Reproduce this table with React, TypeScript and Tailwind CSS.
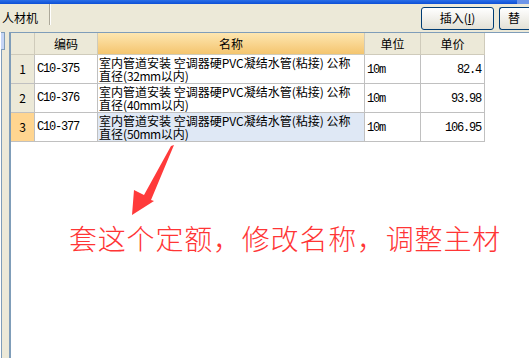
import React from "react";

const CJK = "font-['SimSun','Noto_Sans_CJK_SC',sans-serif]";
const MONO = "font-['Liberation_Mono',monospace] text-[12px] tracking-[-1.2px]";

type Row = { no: number; code: string; size: string; unit: string; price: string };

const rows: Row[] = [
  { no: 1, code: "C10-375", size: "32", unit: "10m", price: "82.4" },
  { no: 2, code: "C10-376", size: "40", unit: "10m", price: "93.98" },
  { no: 3, code: "C10-377", size: "50", unit: "10m", price: "106.95" },
];

function XpButton({ children, className = "" }: { children: React.ReactNode; className?: string }) {
  return (
    <div
      className={`flex h-[23px] items-center justify-center rounded-[3px] border border-[#003c74] bg-gradient-to-b from-white to-[#e3e1d6] text-[12px] text-black ${className}`}
    >
      {children}
    </div>
  );
}

export default function App() {
  return (
    <div className={`relative flex h-[358px] w-[529px] flex-col overflow-hidden bg-white ${CJK}`}>
      {/* title bar strip */}
      <div className="flex h-[4px] bg-gradient-to-b from-[#2a6ee8] to-[#0c4fd6]">
        <div className="flex-1" />
        <div className="w-[12px] bg-[#6d95e8]" />
      </div>

      {/* toolbar */}
      <div className="flex h-[28px] items-center bg-[#ece9d8]">
        <div className="flex h-full items-center pl-[2px] pr-[11px] text-[12px] text-black">人材机</div>
        <div className="h-[21px] w-[2px] self-start border-l border-r border-l-[#aca899] border-r-white" />
        <div className="flex-1" />
        <XpButton className="w-[73px]">
          插入(<span className="underline">I</span>)
        </XpButton>
        <XpButton className="ml-[5px] w-[30px] justify-start rounded-r-none border-r-0 pl-[8px]">替</XpButton>
      </div>

      {/* body */}
      <div className="flex flex-1">
        {/* left dock */}
        <div className="flex w-[9px] flex-col border-l border-white bg-[#ece9d8]">
          <div className="h-[18px] w-[4px] border-y border-r border-[#7f9db9] bg-[#c5d5f5]" />
          <div className="flex flex-1">
            <div className="w-[1px] bg-[#7f9db9]" />
          </div>
        </div>

        {/* grid panel */}
        <div className="relative flex flex-1 flex-col border-l-2 border-t border-[#7f9db9] bg-white">
          <div className="flex flex-col text-[12px] text-black">
            {/* header */}
            <div className="flex h-[22px]">
              <div className="w-[24px] border-b border-r border-[#cfcbbb] bg-[#ece9d8]" />
              <div className="flex w-[63px] items-center justify-center border-b border-r border-[#cfcbbb] bg-[#ece9d8]">编码</div>
              <div className="flex w-[267px] items-center justify-center border-b border-r border-[#cfcbbb] bg-gradient-to-b from-[#fde6b0] to-[#f4c56e]">名称</div>
              <div className="flex w-[56px] items-center justify-center border-b border-r border-[#cfcbbb] bg-[#ece9d8]">单位</div>
              <div className="flex w-[64px] items-center justify-center border-b border-r border-[#cfcbbb] bg-[#ece9d8]">单价</div>
            </div>

            {rows.map((r) => {
              const sel = r.no === 3;
              return (
                <div key={r.no} className="flex h-[29px]">
                  <div
                    className={`flex w-[24px] items-center justify-center border-b border-r border-[#c0c0c0] ${
                      sel ? "bg-[#ffd590]" : "bg-[#ece9d8]"
                    }`}
                  >
                    {r.no}
                  </div>
                  <div className={`flex w-[63px] items-center border-b border-r border-[#c0c0c0] pl-[2px] ${MONO}`}>
                    {r.code}
                  </div>
                  <div
                    className={`flex w-[267px] items-center overflow-hidden whitespace-nowrap border-b border-r border-[#c0c0c0] pl-[1px] leading-[13px] ${
                      sel ? "bg-[#dfe8f5]" : ""
                    }`}
                  >
                    <div>
                      室内管道安装 空调器硬PVC凝结水管(粘接) 公称
                      <br />
                      直径(<span className="tracking-[-0.5px]">{r.size}mm</span>以内)
                    </div>
                  </div>
                  <div className={`flex w-[56px] items-center border-b border-r border-[#c0c0c0] pl-[2px] pt-[2px] ${MONO}`}>
                    {r.unit}
                  </div>
                  <div className={`flex w-[64px] items-center justify-end border-b border-r border-[#c0c0c0] pr-[3px] pt-[2px] ${MONO}`}>
                    {r.price}
                  </div>
                </div>
              );
            })}
          </div>

          {/* annotation */}
          <svg className="absolute left-[-10px] top-[-32px]" width="529" height="358" viewBox="0 0 529 358">
            <polygon
              points="173,144 150,199 153,200 131,214 133,189 143,194 170,145"
              fill="#ff3a3a"
            />
          </svg>
          <div className="ml-[58px] mt-[80px] text-[28px] leading-[32px] tracking-[0.8px] text-[#ff3535] font-['Noto_Sans_CJK_SC',sans-serif] font-light">
            套这个定额，修改名称，调整主材
          </div>
        </div>
      </div>
    </div>
  );
}
